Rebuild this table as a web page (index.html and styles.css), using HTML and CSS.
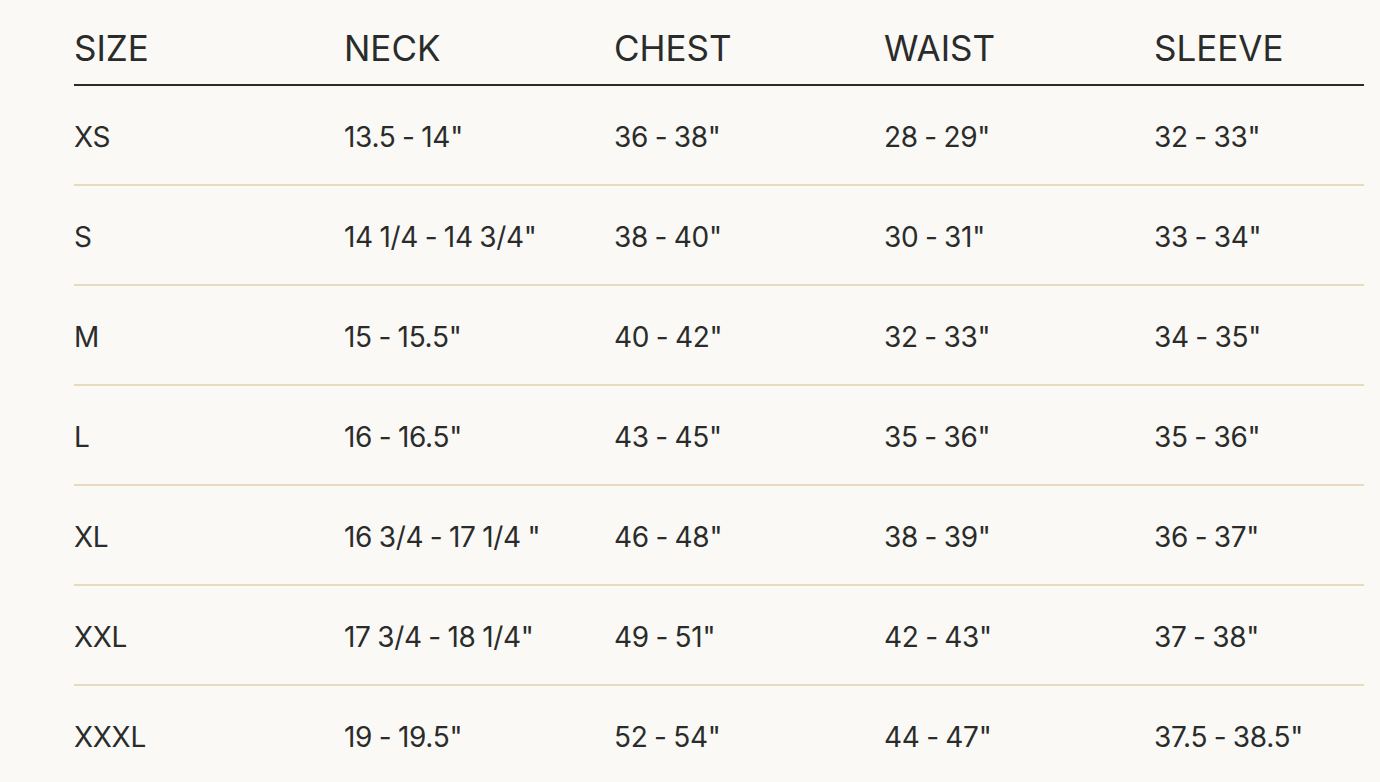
FILE: index.html
```html
<!DOCTYPE html>
<html lang="en">
<head>
<meta charset="utf-8">
<title>Size chart</title>
<link rel="stylesheet" href="styles.css">
</head>
<body>
<div class="chart">
  <div class="row head">
    <div class="cell">SIZE</div>
    <div class="cell">NECK</div>
    <div class="cell">CHEST</div>
    <div class="cell">WAIST</div>
    <div class="cell">SLEEVE</div>
  </div>
  <div class="row">
    <div class="cell">XS</div>
    <div class="cell">13.5 - 14"</div>
    <div class="cell">36 - 38"</div>
    <div class="cell">28 - 29"</div>
    <div class="cell">32 - 33"</div>
  </div>
  <div class="row">
    <div class="cell">S</div>
    <div class="cell">14 1/4 - 14 3/4"</div>
    <div class="cell">38 - 40"</div>
    <div class="cell">30 - 31"</div>
    <div class="cell">33 - 34"</div>
  </div>
  <div class="row">
    <div class="cell">M</div>
    <div class="cell">15 - 15.5"</div>
    <div class="cell">40 - 42"</div>
    <div class="cell">32 - 33"</div>
    <div class="cell">34 - 35"</div>
  </div>
  <div class="row">
    <div class="cell">L</div>
    <div class="cell">16 - 16.5"</div>
    <div class="cell">43 - 45"</div>
    <div class="cell">35 - 36"</div>
    <div class="cell">35 - 36"</div>
  </div>
  <div class="row">
    <div class="cell">XL</div>
    <div class="cell">16 3/4 - 17 1/4 "</div>
    <div class="cell">46 - 48"</div>
    <div class="cell">38 - 39"</div>
    <div class="cell">36 - 37"</div>
  </div>
  <div class="row">
    <div class="cell">XXL</div>
    <div class="cell">17 3/4 - 18 1/4"</div>
    <div class="cell">49 - 51"</div>
    <div class="cell">42 - 43"</div>
    <div class="cell">37 - 38"</div>
  </div>
  <div class="row last">
    <div class="cell">XXXL</div>
    <div class="cell">19 - 19.5"</div>
    <div class="cell">52 - 54"</div>
    <div class="cell">44 - 47"</div>
    <div class="cell">37.5 - 38.5"</div>
  </div>
</div>
</body>
</html>
```

FILE: styles.css
```css
html, body {
  margin: 0;
  padding: 0;
  background: #faf9f5;
}
body {
  font-family: Inter, "Liberation Sans", sans-serif;
  color: #2a2c2c;
}
.chart {
  padding: 0 16px 0 74px;
}
.row {
  display: grid;
  grid-template-columns: 270px 270px 270px 270px 1fr;
  align-items: center;
  height: 98px;
  border-bottom: 2px solid #e8dabd;
  font-size: 28px;
  line-height: 28px;
  letter-spacing: -0.3px;
  word-spacing: -1px;
}
.row .cell {
  padding-top: 3px;
}
.row.head {
  height: 84px;
  align-items: start;
  border-bottom: 2px solid #2a2c2c;
  font-size: 35px;
  line-height: 35px;
  letter-spacing: 0;
  word-spacing: 0;
}
.row.head .cell {
  padding-top: 31px;
}
.row.last {
  border-bottom: none;
}
.cell {
  white-space: nowrap;
}
```
